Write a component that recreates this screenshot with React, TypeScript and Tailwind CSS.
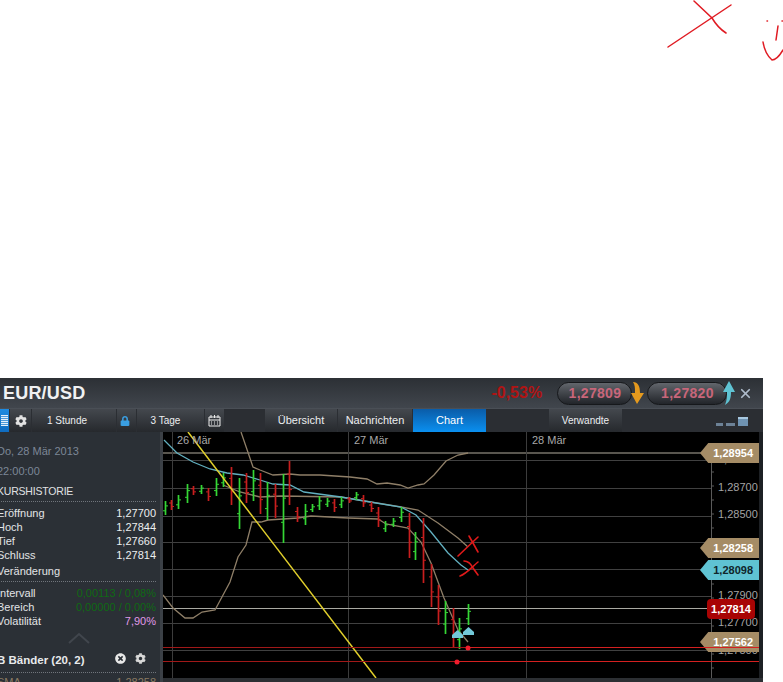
import { FaCog, FaLock, FaTimesCircle } from "react-icons/fa";
import { X } from "lucide-react";

type C = [number, number, number, number];
const candles: C[] = [
  [165, 501, 515, 1],[171, 500, 510, 0],[178, 495, 509, 1],[187, 484, 503, 1],[193, 486, 495, 0],[201, 485, 494, 1],
  [208, 488, 501, 0],[216, 478, 496, 1],[223, 473, 487, 1],[231, 467, 505, 0],[239, 478, 529, 1],[246, 473, 503, 0],
  [253, 470, 501, 1],[260, 473, 514, 0],[267, 482, 520, 1],[275, 484, 518, 0],[283, 474, 543, 1],[289, 461, 505, 0],
  [297, 507, 522, 0],[305, 504, 525, 1],[312, 504, 512, 1],[319, 496, 510, 1],[327, 498, 507, 1],[334, 499, 512, 0],
  [341, 497, 508, 1],[349, 497, 503, 0],[356, 492, 500, 1],[363, 495, 507, 0],[371, 502, 512, 0],[378, 507, 527, 0],
  [385, 521, 532, 1],[393, 518, 527, 1],[401, 507, 522, 1],[409, 513, 558, 0],[415, 532, 560, 1],[423, 518, 583, 0],
  [431, 564, 607, 0],[438, 585, 625, 0],[445, 601, 634, 1],[453, 608, 647, 0],[459, 618, 649, 1],[468, 604, 625, 1],
];

const upper = "241,432 253,467 260,470 273,475 290,474 300,475 320,475 350,477 367,479 377,484 387,483 400,485 408,488 418,485 424,484 434,475 446,461 458,455 468,453";
const lower = "163,595 173,608 185,618 193,618 202,612 215,610 230,582 238,557 246,545 252,522 261,522 268,520 298,518 311,516 348,518 378,519 386,524 408,528 421,542 431,563 444,598 458,630 468,642";
const middle = "223,485 240,492 260,497 281,496 341,497 401,507 418,510 438,523 458,538 468,547";
const blue = "164,440 177,453 193,462 210,469 227,473 243,475 260,480 273,484 290,485 304,492 341,497 364,501 401,507 416,515 431,532 448,553 461,565 468,570";

const gridY = [460, 488, 516, 542, 569, 596, 623, 650];
const axisLabels: [string, string][] = [
  ["1,28900", "top-[21px]"],["1,28700", "top-[49px]"],["1,28500", "top-[76px]"],["1,27900", "top-[157px]"],["1,27700", "top-[184px]"],["1,27500", "top-[212px]"],
];

function Chart() {
  return (
    <div className="relative h-[246px] w-[596px] overflow-hidden bg-black">
      <svg width={596} height={246} viewBox="163 432 596 246" className="block">
        {gridY.map((y) => <line key={y} x1={163} x2={711} y1={y + 0.5} y2={y + 0.5} stroke="#404040" />)}
        <line x1={163} x2={759} y1={453} y2={453} stroke="#77736a" strokeWidth={1.5} />
        {[172, 348, 526].map((x) => <line key={x} x1={x + 0.5} x2={x + 0.5} y1={432} y2={678} stroke="#3c3c3c" />)}
        <line x1={163} x2={711} y1={608.5} y2={608.5} stroke="#a9a9a2" />
        <line x1={711.5} x2={711.5} y1={463} y2={678} stroke="#5a5a5a" />
        {Array.from({ length: 16 }, (_, i) => <line key={i} x1={711} x2={714} y1={472 + i * 14} y2={472 + i * 14} stroke="#5a5a5a" />)}
        <polyline points={upper} fill="none" stroke="#8f7f68" strokeWidth={1.3} />
        <polyline points={lower} fill="none" stroke="#8f7f68" strokeWidth={1.3} />
        <polyline points={middle} fill="none" stroke="#8f7f68" strokeWidth={1.3} />
        <polyline points={blue} fill="none" stroke="#62b0c0" strokeWidth={1.3} />
        {candles.map(([x, t, b, g]) => {
          const col = g ? "#35d635" : "#c81e1e";
          const h = b - t;
          const open = g ? t + h * 0.7 : t + h * 0.3;
          const close = g ? t + h * 0.35 : t + h * 0.65;
          return (
            <g key={x} stroke={col}>
              <line x1={x + 0.5} x2={x + 0.5} y1={t} y2={b} strokeWidth={1.7} />
              <line x1={x - 2} x2={x} y1={open} y2={open} />
              <line x1={x + 1} x2={x + 3} y1={close} y2={close} />
            </g>
          );
        })}
        <line x1={188} y1={432} x2={376} y2={678} stroke="#e2d02c" strokeWidth={1.5} />
        <rect x={163} y={647} width={305} height={1} fill="#a01818" />
        <rect x={468} y={647} width={291} height={1} fill="#d42020" />
        <rect x={163} y={661} width={294} height={1} fill="#a01818" />
        <rect x={457} y={661} width={302} height={1} fill="#d42020" />
        <circle cx={468} cy={648} r={2.5} fill="#f01c2c" />
        <circle cx={457} cy={662} r={2.5} fill="#f01c2c" />
        <polygon points="457.5,630 463,635 463,638 452,638 452,635" fill="#72c8d8" />
        <polygon points="468.5,627 474,632 474,635 463,635 463,632" fill="#72c8d8" />
        <g fill="none" stroke="#e01a1a" strokeWidth={1.6} strokeLinecap="round">
          <path d="M458 556 L478 537" />
          <path d="M469 536 L473 543 L478 552" />
          <path d="M460 576 C466 574 472 567 478 562" />
          <path d="M464 561 C468 561 471 564 473 568 L478 575" />
        </g>
      </svg>
      <span className="absolute left-[14px] top-[2px] text-[11px] leading-[13px] text-[#a8a8a8]">26 Mär</span>
      <span className="absolute left-[191px] top-[2px] text-[11px] leading-[13px] text-[#a8a8a8]">27 Mär</span>
      <span className="absolute left-[369px] top-[2px] text-[11px] leading-[13px] text-[#a8a8a8]">28 Mär</span>
      {axisLabels.map(([t, c]) => (
        <span key={t} className={`absolute left-[555px] text-[11px] leading-[13px] text-[#a4a4a4] ${c}`}>{t}</span>
      ))}
      <Tag value="1,28954" className="top-[11px] bg-[#a58c66] text-white" />
      <Tag value="1,28258" className="top-[106px] bg-[#a58c66] text-white" />
      <Tag value="1,28098" className="top-[128px] bg-[#5fc3d3] text-[#10262b]" />
      <div className="absolute left-[544px] top-[167px] flex h-[20px] w-[48px] items-center justify-center rounded-[4px] bg-[#a80404] text-[11px] font-bold text-white">1,27814</div>
      <Tag value="1,27562" className="top-[200px] bg-[#a58c66] text-white" />
      <div className="absolute left-[537px] top-[215px] h-px w-[59px] bg-[#d42020]" />
    </div>
  );
}

function Tag({ value, className }: { value: string; className: string }) {
  return (
    <div className={`absolute left-[537px] flex h-[20px] w-[59px] items-center justify-end pr-[6px] text-[11px] font-bold [clip-path:polygon(0_50%,14%_0,100%_0,100%_100%,14%_100%)] ${className}`}>
      {value}
    </div>
  );
}

function Row({ label, value, color = "text-[#eceef0]" }: { label: string; value?: string; color?: string }) {
  return (
    <div className="flex h-[14px] items-center justify-between text-[11px] leading-[14px]">
      <span className="text-[#e2e4e6]">{label}</span>
      {value && <span className={color}>{value}</span>}
    </div>
  );
}

function Sidebar() {
  return (
    <div className="h-[250px] w-[163px] shrink-0 overflow-hidden border-r-[3px] border-[#3b4046] bg-[#2b3036] pr-[4px]">
      <div className="-ml-[3px]">
        <div className="mt-[12px] text-[11px] leading-[14px] text-[#7c8796]">Do, 28 Mär 2013</div>
        <div className="mt-[6px] text-[11px] leading-[14px] text-[#7c8796]">22:00:00</div>
        <div className="mt-[6px] border-b border-dotted border-[#70757c] pb-[3px] text-[10.5px] leading-[14px] tracking-[-0.2px] text-[#e0e2e4]">KURSHISTORIE</div>
        <div className="mt-[4px]">
          <Row label="Eröffnung" value="1,27700" />
          <Row label="Hoch" value="1,27844" />
          <Row label="Tief" value="1,27660" />
          <Row label="Schluss" value="1,27814" />
        </div>
        <div className="mt-[2px] border-b border-dotted border-[#70757c] pb-[3px]">
          <Row label="Veränderung" />
        </div>
        <div className="mt-[4px]">
          <Row label="Intervall" value="0,00113 / 0,08%" color="text-[#0f6a14]" />
          <Row label="Bereich" value="0,00000 / 0,00%" color="text-[#0f6a14]" />
          <Row label="Volatilität" value="7,90%" color="text-[#e09ae8]" />
        </div>
        <div className="flex h-[16px] items-end justify-center pl-[4px]">
          <svg width={22} height={12} viewBox="0 0 22 12"><path d="M1 11 L11 2 L21 11" fill="none" stroke="#41464d" strokeWidth={2} /></svg>
        </div>
        <div className="mt-[9px] flex h-[16px] items-center pr-[10px] text-[11.5px] font-bold text-[#e8eaec]">
          <span className="flex-1">B Bänder (20, 2)</span>
          <FaTimesCircle className="mb-[5px] mr-[9px] text-[11px] text-[#e8e8e8]" />
          <FaCog className="mb-[5px] text-[11px] text-[#d8d8d8]" />
        </div>
        <div className="mt-[3px] flex h-[14px] items-start justify-between border-t border-dotted border-[#70757c] pt-[3px] text-[11px] leading-[12px] text-[#8a7a62]">
          <span>SMA</span><span>1,28258</span>
        </div>
      </div>
    </div>
  );
}

function Seg({ w, children, className = "" }: { w: string; children: React.ReactNode; className?: string }) {
  return (
    <div className={`flex h-full items-center justify-center bg-gradient-to-b from-[#44484e] to-[#26292d] text-[10px] text-[#eceef0] ${w} ${className}`}>
      {children}
    </div>
  );
}

function Pill({ value, w }: { value: string; w: string }) {
  return (
    <div className={`flex h-[23px] items-center justify-center rounded-full border border-[#16181b] bg-gradient-to-b from-[#62666c] to-[#22252a] text-[14px] font-bold tracking-[0.3px] text-[#c8667a] ${w}`}>
      {value}
    </div>
  );
}

export default function App() {
  return (
    <div className="relative h-[682px] w-[783px] overflow-hidden bg-white font-['Liberation_Sans',sans-serif]">
      <svg className="absolute left-0 top-0" width={783} height={70} viewBox="0 0 783 70">
        <g fill="none" stroke="#e01a22" strokeWidth={1.5} strokeLinecap="round">
          <path d="M668 47 L731 5" />
          <path d="M694 1 L712 18 Q718 28 726 33" />
          <path d="M763 42 Q765 54 772 60 Q777 60 783 50" />
          <path d="M778 26 L776 40" />
          <path d="M767 21 L767.5 21 M782 21 L782.5 21" />
        </g>
      </svg>
      <div className="h-[378px]" />
      <div className="flex h-[304px] w-[763px] flex-col">
        <div className="relative flex h-[30px] items-center bg-gradient-to-b from-[#2c3035] to-[#41464d]">
          <span className="ml-[3px] text-[18px] font-bold tracking-[0.2px] text-[#f0f1f2]">EUR/USD</span>
          <span className="ml-[406px] w-[66px] text-[16px] font-bold text-[#b01414]">-0,53%</span>
          <Pill value="1,27809" w="w-[75px]" />
          <svg width={15} height={24} viewBox="0 0 15 24" className="-ml-[2px]"><path d="M3 1 C8 1 10 5 10 12 L14 12 L7 23 L1 12 L5 12 C5 7 5 4 3 1Z" fill="#e59a1e" /></svg>
          <Pill value="1,27820" w="w-[80px] ml-[2px]" />
          <svg width={14} height={26} viewBox="0 0 14 26" className="-ml-[5px]"><path d="M7 1 L13 12 L9 12 C9 18 8 22 3 25 C5 20 5 16 5 12 L1 12Z" fill="#5fc3d3" /></svg>
          <X size={15} strokeWidth={2.8} className="ml-[2px] text-[#aebccb]" />
        </div>
        <div className="flex h-[24px] items-stretch gap-px border-t border-[#4a4f56] bg-[#2b2e33]">
          <div className="flex w-[9px] items-center justify-center bg-gradient-to-b from-[#1e8be0] to-[#0f6cc0]">
            <div className="h-[11px] w-[7px] bg-[repeating-linear-gradient(to_bottom,#e4f0fa_0,#e4f0fa_1px,#4f9ad8_1px,#4f9ad8_2px)]" />
          </div>
          <Seg w="w-[21px]"><FaCog className="text-[12px] text-[#e2e2e2]" /></Seg>
          <Seg w="w-[84px]" className="pr-[14px] text-[10.5px]">1 Stunde</Seg>
          <Seg w="w-[19px]"><FaLock className="mr-[3px] text-[10px] text-[#3a9fe2]" /></Seg>
          <Seg w="w-[67px]" className="pr-[10px] text-[10.5px]">3 Tage</Seg>
          <Seg w="w-[19px]">
            <svg width={13} height={13} viewBox="0 0 13 13"><path d="M1 3h11v9H1z" fill="none" stroke="#eee" /><path d="M3 1v3M6.5 1v3M10 1v3M1 6h11M3 8h1M6 8h1M9 8h1M3 10h1M6 10h1M9 10h1" stroke="#eee" /></svg>
          </Seg>
          <Seg w="w-[72px] ml-[40px]" className="text-[11px]">Übersicht</Seg>
          <Seg w="w-[74px]" className="text-[11px]">Nachrichten</Seg>
          <div className="flex h-full w-[73px] items-center justify-center bg-gradient-to-b from-[#0a5ca8] to-[#0a90f0] text-[11px] text-white">Chart</div>
          <Seg w="w-[73px] ml-[62px]">Verwandte</Seg>
          <div className="ml-[93px] flex items-end gap-[3px] pb-[6px]">
            <div className="h-[3px] w-[7px] bg-[#6d8297]" />
            <div className="h-[3px] w-[9px] bg-[#6d8297]" />
            <div className="h-[9px] w-[10px] border-t-2 border-[#a8c8e0] bg-[#6f93b2]" />
          </div>
        </div>
        <div className="flex">
          <Sidebar />
          <div className="flex flex-col">
            <div className="flex">
              <Chart />
              <div className="w-[4px] bg-[#1d2024]" />
            </div>
            <div className="h-[4px] bg-[#2c2f33]" />
          </div>
        </div>
      </div>
    </div>
  );
}
